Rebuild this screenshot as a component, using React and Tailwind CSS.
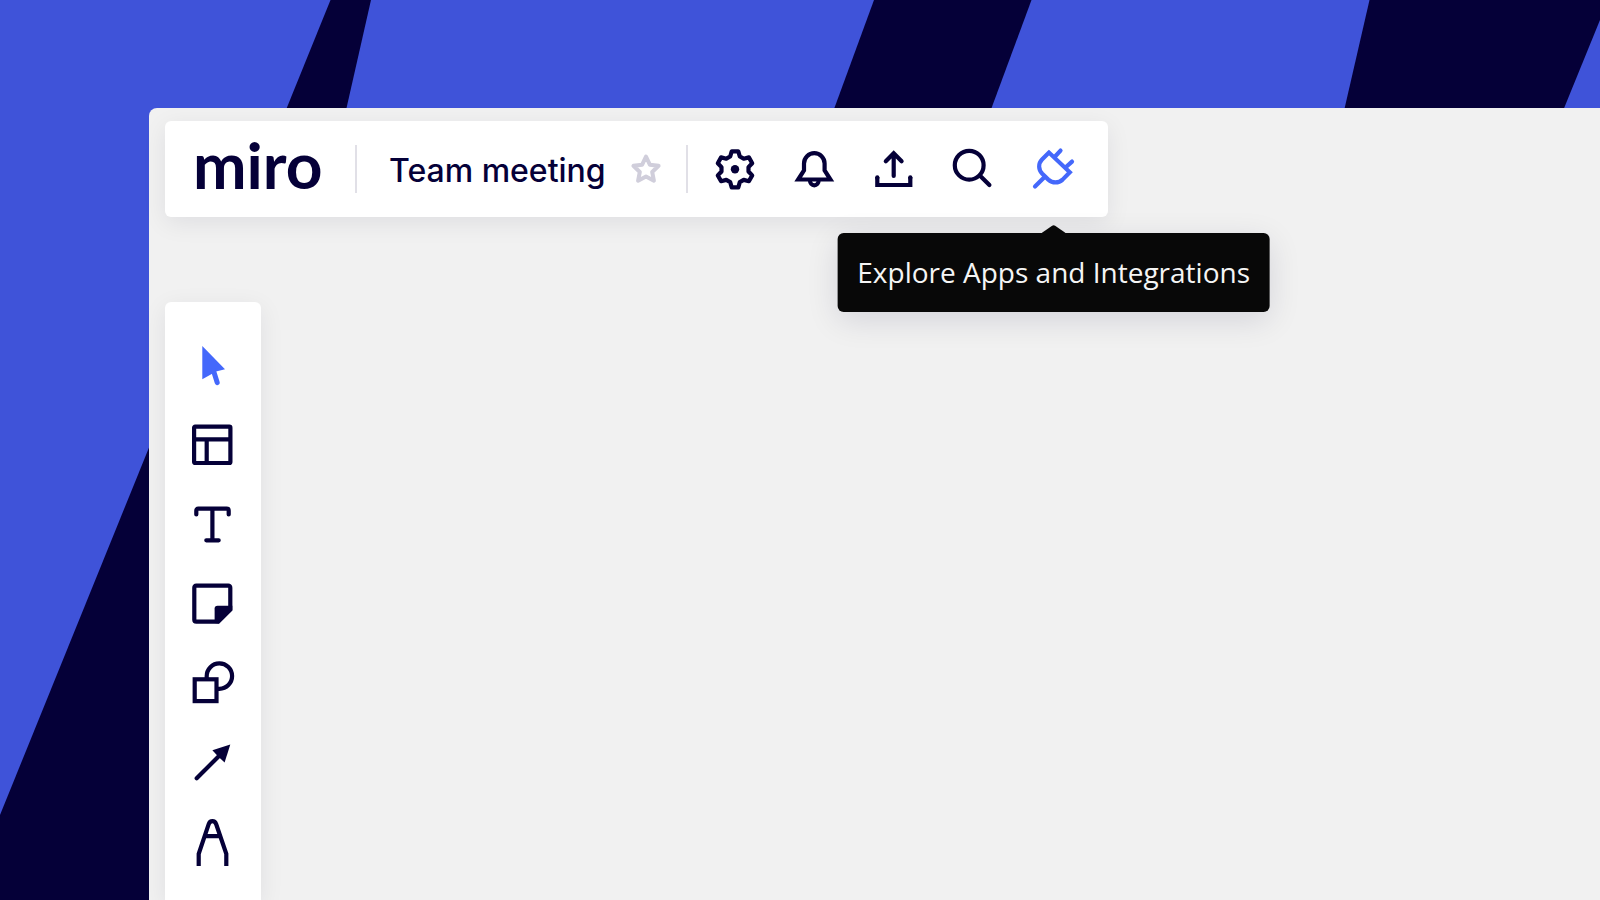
import React, { useState } from 'react';

const Icon = ({ children }) => (
  <svg
    viewBox="0 0 48 48"
    className="h-12 w-12 overflow-visible"
    fill="none"
    stroke="currentColor"
    strokeWidth="4.2"
    aria-hidden="true"
  >
    {children}
  </svg>
);

const actions = [
  {
    id: 'settings',
    label: 'Settings',
    icon: (
      <Icon>
        <g transform="translate(25 24.3)" strokeLinejoin="round">
          <path d="M-3.3 -18H3.3L4.8 -12.8L8.7 -10.6L13.9 -11.9L17.2 -6.1L13.5 -2.2V2.2L17.2 6.1L13.9 11.9L8.7 10.6L4.8 12.8L3.3 18H-3.3L-4.8 12.8L-8.7 10.6L-13.9 11.9L-17.2 6.1L-13.5 2.2V-2.2L-17.2 -6.1L-13.9 -11.9L-8.7 -10.6L-4.8 -12.8Z" />
          <circle r="4.2" fill="currentColor" stroke="none" />
        </g>
      </Icon>
    ),
  },
  {
    id: 'notifications',
    label: 'Notifications',
    icon: (
      <Icon>
        <path d="M8.2 34.5L14 25.5V18.5a10.3 10.3 0 0 1 20.6 0V25.5L40.4 34.5Z" />
        <path d="M20 35.5a4.3 4.8 0 0 0 8.6 0" />
      </Icon>
    ),
  },
  {
    id: 'export',
    label: 'Export',
    icon: (
      <Icon>
        <path d="M23.7 31V8.6M15.8 16.3L23.7 8.3L31.6 16.3" strokeLinecap="round" />
        <path d="M7.3 32V40H40.3V32" />
        <path d="M7.3 33V32.3M40.3 33V32.3" strokeLinecap="round" />
      </Icon>
    ),
  },
  {
    id: 'search',
    label: 'Search',
    icon: (
      <Icon>
        <circle cx="19.2" cy="20.2" r="14.4" />
        <path d="M29.8 30.4L39.4 40" strokeLinecap="round" />
      </Icon>
    ),
  },
];

const tools = [
  {
    id: 'select',
    label: 'Select',
    icon: (
      <Icon>
        <path d="M13.3 5L36 28.3L25 31L22.7 33L13.3 38.3Z" fill="currentColor" stroke="none" />
        <path d="M24.6 30L28.2 41.6" strokeWidth="5" strokeLinecap="round" />
      </Icon>
    ),
  },
  {
    id: 'templates',
    label: 'Templates',
    icon: (
      <Icon>
        <rect x="5.1" y="5.7" width="36.3" height="36.3" rx="1" />
        <path d="M5.1 18.3H41.4M17.7 18.3V42" />
      </Icon>
    ),
  },
  {
    id: 'text',
    label: 'Text',
    icon: (
      <Icon>
        <path d="M7.3 13.4V9.7Q7.3 7.7 9.3 7.7H37.7Q39.7 7.7 39.7 9.7V13.4M23.4 7.7V39.3M17.3 39.3H29.7" strokeLinecap="round" />
      </Icon>
    ),
  },
  {
    id: 'sticky',
    label: 'Sticky note',
    icon: (
      <Icon>
        <path d="M41.3 27V6.7Q41.3 4.7 39.3 4.7H7.3Q5.3 4.7 5.3 6.7V38.7Q5.3 40.7 7.3 40.7H29L41.3 28.4Z" />
        <path d="M25.6 42V27.6Q25.6 24.7 28.5 24.7H43.3V29.4L30.2 42.6Z" fill="currentColor" stroke="none" />
      </Icon>
    ),
  },
  {
    id: 'shapes',
    label: 'Shapes',
    icon: (
      <Icon>
        <path d="M17.7 18V15.2A12.7 12.7 0 1 1 30.4 27.8H28" />
        <rect x="5.7" y="18.3" width="21.8" height="21.8" />
      </Icon>
    ),
  },
  {
    id: 'arrow',
    label: 'Connection line',
    icon: (
      <Icon>
        <path d="M7.7 37.3L31 14" strokeLinecap="round" />
        <path d="M41.3 3.5L23.4 9.3L28.2 14.4L30.5 16.7L35.6 21.6Z" fill="currentColor" stroke="none" />
      </Icon>
    ),
  },
  {
    id: 'pen',
    label: 'Pen',
    icon: (
      <Icon>
        <path d="M9.7 45V32.8L19.7 3.2C21 -.8 25.8 -.8 27.2 3.2L37.3 32.8V45M16.5 15.2H30.5" />
      </Icon>
    ),
  },
];

export default function App() {
  const [activeTool, setActiveTool] = useState('select');
  const [starred, setStarred] = useState(false);

  return (
    <div className="relative flex h-screen flex-col overflow-hidden bg-[#050038] pt-[108px] pl-[149px] font-[Inter,sans-serif] text-[#050038]">
      {/* Diagonal stripes behind the board */}
      <svg
        viewBox="0 0 1600 900"
        preserveAspectRatio="xMinYMin slice"
        className="absolute inset-0 h-full w-full"
        fill="#3f53d9"
        aria-hidden="true"
      >
        <path d="M0 0H330.5L0 815Z" />
        <path d="M371 0H874L819 150H337Z" />
        <path d="M1031.5 0H1369.5L1335 150H976Z" />
        <path d="M1600 20L1547 150H1600Z" />
      </svg>

      {/* Board */}
      <main className="relative flex flex-1 flex-col items-start rounded-tl-lg bg-[#f1f1f1] pt-[13px] pl-4">
        <header className="relative z-10 flex h-24 items-center rounded-md bg-white pr-[30px] pl-7 shadow-[0_6px_24px_rgba(5,0,56,0.08)]">
          <a href="#" className="w-[162px] pb-2 font-[Lato,sans-serif] text-[64px] leading-[64px] font-bold">
            miro
          </a>
          <div className="h-12 w-0.5 bg-[#e1e0e7]" />
          <h1 className="pt-1 pl-8 text-[32px] leading-10 font-medium whitespace-nowrap">Team meeting</h1>
          <button
            type="button"
            aria-label="Star this board"
            aria-pressed={starred}
            onClick={() => setStarred(!starred)}
            className="mx-6 text-[#d0cedb]"
          >
            <svg
              viewBox="0 0 32 32"
              className="h-8 w-8"
              fill={starred ? 'currentColor' : 'none'}
              stroke="currentColor"
              strokeWidth="4"
              strokeLinejoin="round"
              aria-hidden="true"
            >
              <path d="M16 3.5L19.8 11.7L28.6 12.8L22.2 19L23.9 27.7L16 23.5L8.1 27.7L9.8 19L3.4 12.8L12.2 11.7Z" />
            </svg>
          </button>
          <div className="h-12 w-0.5 bg-[#e1e0e7]" />

          <nav className="flex gap-8 pl-[22px]">
            {actions.map((action) => (
              <button key={action.id} type="button" aria-label={action.label}>
                {action.icon}
              </button>
            ))}
            <div className="relative">
              <button type="button" aria-label="Apps" aria-describedby="apps-tooltip" className="block text-[#4468fb]">
                <Icon>
                  <path d="M19 7.6L12 14.5C8 18.6 8.3 24.6 12.3 28.8L18.3 34.6C22.5 38.4 28.5 38.4 32.6 34.6L39.8 27.3Z" />
                  <path d="M14.6 32L5 41.6M25.3 11.2L30.5 5.6M36.3 21.8L42 16.6" strokeLinecap="round" />
                </Icon>
              </button>
              <div
                id="apps-tooltip"
                role="tooltip"
                className="absolute top-[88px] left-1/2 -translate-x-1/2 rounded-md bg-[#080808] px-5 py-5 font-['Open_Sans',sans-serif] text-[28px] leading-[39px] whitespace-nowrap text-[#f5f5f5] shadow-[0_8px_32px_rgba(5,0,56,0.12)]"
              >
                <svg
                  viewBox="0 0 24 8"
                  className="absolute bottom-full left-1/2 h-2 w-6 -translate-x-1/2"
                  fill="#080808"
                  aria-hidden="true"
                >
                  <path d="M0 8L10.5 .8Q12 -.2 13.5 .8L24 8Z" />
                </svg>
                Explore Apps and Integrations
              </div>
            </div>
          </nav>
        </header>

        {/* Tools */}
        <aside className="mt-[85px] flex w-24 flex-1 flex-col items-center gap-8 rounded-t-md bg-white pt-[39px] shadow-[0_6px_24px_rgba(5,0,56,0.08)]">
          {tools.map((tool) => (
            <button
              key={tool.id}
              type="button"
              aria-label={tool.label}
              onClick={() => setActiveTool(tool.id)}
              className={activeTool === tool.id ? 'text-[#4468fb]' : 'text-[#050038]'}
            >
              {tool.icon}
            </button>
          ))}
        </aside>
      </main>
    </div>
  );
}
